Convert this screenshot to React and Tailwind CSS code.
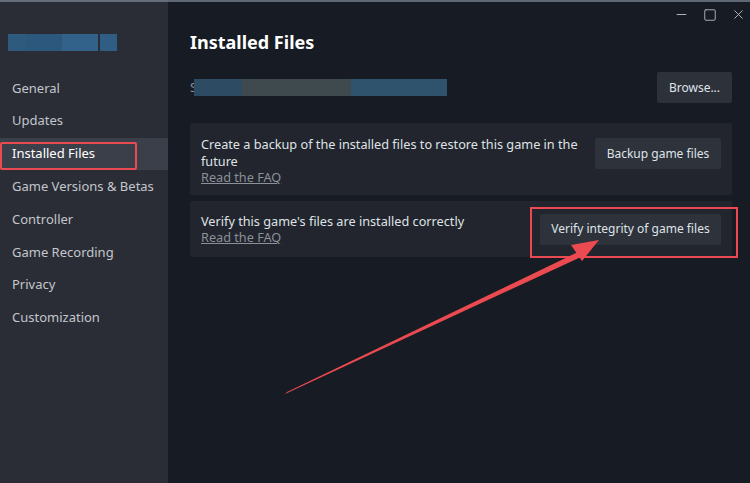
import { Minus, Square, X } from "lucide-react";

const NAV = ["General", "Updates", "Installed Files", "Game Versions & Betas", "Controller", "Game Recording", "Privacy", "Customization"];

const font = { fontFamily: '"Noto Sans", "Liberation Sans", sans-serif' };

const App = () => {
  return (
    <div className="relative w-[750px] h-[483px] flex overflow-hidden bg-[#171c24]" style={font}>
      {/* sidebar */}
      <div className="w-[168px] h-full bg-[#2a2d36] flex flex-col">
        <div className="mt-[34px] ml-[8px] flex h-[17px]">
          <div className="w-[18px] bg-[#2e5a7e]" />
          <div className="w-[36px] bg-[#2c587d]" />
          <div className="w-[36px] bg-[#32618a]" />
          <div className="w-[2px] bg-[#2a2d36]" />
          <div className="w-[17px] bg-[#2f5d84]" />
        </div>
        <div className="mt-[21px] flex flex-col">
          {NAV.map((n) => (
            <div
              key={n}
              className={`relative h-[32.8px] flex items-center pl-[12px] text-[13px] ${
                n === "Installed Files" ? "bg-[#3b3f4a] text-white" : "text-[#c3c6cb]"
              }`}
            >
              {n}
              {n === "Installed Files" && (
                <div className="absolute left-0 top-[4px] w-[137px] h-[28px] border-2 border-[#eb4a50] rounded-[2px]" />
              )}
            </div>
          ))}
        </div>
      </div>

      {/* main */}
      <div className="flex-1 pl-[22px] pr-[18px] pt-[29px]">
        <h1 className="text-[18px] font-bold text-white leading-[26px]">Installed Files</h1>
        <div className="mt-[17px] flex items-center justify-between">
          <div className="flex items-center">
            <span className="text-[13px] text-[#8a8f98]">S</span>
            <div className="flex h-[17px] -ml-[3px]">
              <div className="w-[48px] bg-[#2d4c63]" />
              <div className="w-[109px] bg-[#3e4a4d]" />
              <div className="w-[96px] bg-[#2f526d]" />
            </div>
          </div>
          <button className="w-[75px] h-[31px] rounded-[2px] bg-[#2d3139] text-[12px] text-[#dfe3e8]">Browse...</button>
        </div>

        <div className="mt-[20px] flex flex-col gap-[6px]">
          <div className="h-[72px] bg-[#22252d] rounded-[2px] flex items-center justify-between pl-[11px] pr-[11px]">
            <div className="w-[390px] pt-[4px] text-[12.7px] leading-[16.5px] text-[#dfe3e6]">
              <p>Create a backup of the installed files to restore this game in the future</p>
              <p className="text-[#8b9099] underline">Read the FAQ</p>
            </div>
            <button className="w-[126px] h-[31px] rounded-[2px] bg-[#2e323b] text-[12px] text-[#dfe3e8] -mt-[11px]">Backup game files</button>
          </div>
          <div className="h-[56px] bg-[#22252d] rounded-[2px] flex items-center justify-between pl-[11px] pr-[11px]">
            <div className="text-[12.7px] leading-[16.5px] text-[#dfe3e6]">
              <p>Verify this game's files are installed correctly</p>
              <p className="text-[#8b9099] underline">Read the FAQ</p>
            </div>
            <div className="relative">
              <button className="w-[181px] h-[31px] rounded-[2px] bg-[#2e323b] text-[12px] text-[#dfe3e8]">Verify integrity of game files</button>
              <div className="absolute -left-[10px] -top-[7px] w-[208px] h-[51px] border-2 border-[#eb4a50]" />
            </div>
          </div>
        </div>
      </div>

      {/* window controls */}
      <div className="absolute top-[7px] right-[4px] flex items-center gap-[14px] text-[#b9bdc3]">
        <Minus size={15} strokeWidth={1.5} />
        <Square size={14} strokeWidth={1.5} />
        <X size={15} strokeWidth={1.5} />
      </div>

      {/* annotation arrow */}
      <svg className="absolute inset-0 pointer-events-none" width="750" height="483" viewBox="0 0 750 483">
        <polygon points="285,394 287,392 578,252 581,257" fill="#eb4a50" />
        <polygon points="599,240 571,245 582,261" fill="#eb4a50" />
      </svg>
      <div className="absolute top-0 left-0 w-full h-[2px] bg-[#8f9aa6] opacity-60" />
    </div>
  );
};

export default App;
